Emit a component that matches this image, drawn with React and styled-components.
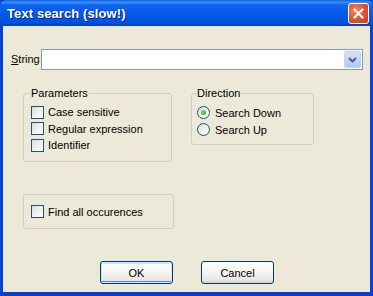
import styled, { createGlobalStyle } from "styled-components";

const GlobalStyle = createGlobalStyle`
    html, body {
        margin: 0;
        padding: 0;
        background: #ece9d8;
    }
    * {
        box-sizing: border-box;
    }
`;

const UiFont = `"Liberation Sans", Arial, sans-serif`;

const Window = styled.div`
    width: 373px;
    height: 296px;
    display: flex;
    flex-direction: column;
    background: #0a3fd6;
    font-family: ${UiFont};
    font-size: 11px;
    color: #000;
`;

const TitleBar = styled.div`
    height: 26px;
    flex-shrink: 0;
    display: flex;
    align-items: center;
    justify-content: space-between;
    padding: 0 4px 0 7px;
    background: linear-gradient(
        to bottom,
        #0a5ee8 0%,
        #3d8ff7 8%,
        #0b64f0 20%,
        #0357e4 60%,
        #0152e0 85%,
        #013fc4 100%
    );
    border-radius: 6px 6px 0 0;
`;

const TitleText = styled.span`
    color: #fff;
    font-weight: bold;
    font-size: 13px;
    text-shadow: 1px 1px 0 #0a1e8a;
    letter-spacing: 0.1px;
`;

const CloseButton = styled.div`
    width: 21px;
    height: 21px;
    border: 1px solid #fff;
    border-radius: 3px;
    background: radial-gradient(circle at 35% 35%, #f08a62 0%, #e2552f 50%, #c43b17 100%);
    display: flex;
    align-items: center;
    justify-content: center;
`;

const Client = styled.div`
    flex: 1;
    margin: 0 3px 4px 3px;
    background: #ece9d8;
    display: flex;
    flex-direction: column;
    padding: 23px 7px 0 8px;
`;

const StringRow = styled.div`
    display: flex;
    align-items: center;
    height: 21px;
`;

const FieldLabel = styled.label`
    width: 30px;
    flex-shrink: 0;
    padding-bottom: 2px;

    u {
        text-decoration: underline;
    }
`;

const Combo = styled.div`
    flex: 1;
    height: 21px;
    border: 1px solid #7f9db9;
    background: #fff;
    display: flex;
    justify-content: flex-end;
    padding: 1px;
`;

const ComboButton = styled.div`
    width: 17px;
    height: 17px;
    border-radius: 2px;
    background: linear-gradient(to bottom, #d6e3fd 0%, #c1d3fb 50%, #b4c8f6 100%);
    border: 1px solid #c4d4f8;
    display: flex;
    align-items: center;
    justify-content: center;
`;

const GroupRow = styled.div`
    display: flex;
    align-items: flex-start;
    gap: 19px;
    margin: 17px 0 0 12px;
`;

const Group = styled.fieldset`
    margin: 0;
    width: ${(p) => p.$w}px;
    height: ${(p) => p.$h}px;
    border: 1px solid #d0d0bf;
    border-radius: 3px;
    padding: ${(p) => p.$pad || "4px 0 0 7px"};
    display: flex;
    flex-direction: column;
`;

const Legend = styled.legend`
    padding: 0 1px 0 0;
    margin-left: 0;
    line-height: 13px;
    font-size: 11px;
`;

const OptionRow = styled.div`
    display: flex;
    align-items: center;
    height: ${(p) => p.$h || 16.5}px;
    gap: ${(p) => p.$gap || 4}px;
    white-space: nowrap;
`;

const CheckBox = styled.span`
    width: 13px;
    height: 13px;
    flex-shrink: 0;
    border: 1px solid #1c5180;
    background: linear-gradient(135deg, #dcdcd7 0%, #ededea 45%, #ffffff 100%);
`;

const Radio = styled.span`
    width: 13px;
    height: 13px;
    flex-shrink: 0;
    border-radius: 50%;
    border: 1px solid #1c5180;
    background: linear-gradient(135deg, #dcdcd7 0%, #ededea 45%, #ffffff 100%);
    display: flex;
    align-items: center;
    justify-content: center;

    &::after {
        content: "";
        width: 5px;
        height: 5px;
        border-radius: 50%;
        background: ${(p) => (p.$checked ? "radial-gradient(circle at 40% 40%, #6de06d, #21a121)" : "transparent")};
    }
`;

const FindGroup = styled.div`
    width: 151px;
    height: 35px;
    margin: 32px 0 0 12px;
    border: 1px solid #d0d0bf;
    border-radius: 3px;
    display: flex;
    align-items: center;
    padding: 0 0 0 7px;
`;

const ButtonRow = styled.div`
    display: flex;
    justify-content: center;
    gap: 28px;
    margin-top: 32px;
`;

const Button = styled.button`
    width: 73px;
    height: 23px;
    border: 1px solid #003c74;
    border-radius: 3px;
    background: linear-gradient(to bottom, #ffffff 0%, #f4f4f0 50%, #e8e7e0 85%, #d6d0c5 100%);
    font-family: ${UiFont};
    font-size: 11px;
    color: #000;
    padding: 0;
    box-shadow: ${(p) =>
        p.$default ? "inset 0 0 0 1px #cee7ff, inset 0 -1px 0 1px #6982ee, inset 0 1px 0 1px #cee7ff" : "none"};
`;

const options = ["Case sensitive", "Regular expression", "Identifier"];

const App = () => {
    return (
        <Window>
            <GlobalStyle />
            <TitleBar>
                <TitleText>Text search (slow!)</TitleText>
                <CloseButton>
                    <svg width="11" height="11" viewBox="0 0 11 11">
                        <path d="M1.5 1.5 L9.5 9.5 M9.5 1.5 L1.5 9.5" stroke="#fff" strokeWidth="2" strokeLinecap="square" />
                    </svg>
                </CloseButton>
            </TitleBar>
            <Client>
                <StringRow>
                    <FieldLabel><u>S</u>tring</FieldLabel>
                    <Combo>
                        <ComboButton>
                            <svg width="9" height="6" viewBox="0 0 9 6">
                                <path d="M1 1 L4.5 4.5 L8 1" stroke="#4d6185" strokeWidth="2" fill="none" />
                            </svg>
                        </ComboButton>
                    </Combo>
                </StringRow>
                <GroupRow>
                    <Group $w={149} $h={75}>
                        <Legend>Parameters</Legend>
                        {options.map((o) => (
                            <OptionRow key={o}>
                                <CheckBox />
                                <span>{o}</span>
                            </OptionRow>
                        ))}
                    </Group>
                    <Group $w={123} $h={58} $pad="4px 0 0 5px">
                        <Legend>Direction</Legend>
                        <OptionRow $gap={5} $h={17}>
                            <Radio $checked />
                            <span>Search Down</span>
                        </OptionRow>
                        <OptionRow $gap={5} $h={17}>
                            <Radio />
                            <span>Search Up</span>
                        </OptionRow>
                    </Group>
                </GroupRow>
                <FindGroup>
                    <OptionRow>
                        <CheckBox />
                        <span>Find all occurences</span>
                    </OptionRow>
                </FindGroup>
                <ButtonRow>
                    <Button $default>OK</Button>
                    <Button>Cancel</Button>
                </ButtonRow>
            </Client>
        </Window>
    );
};

export default App;
